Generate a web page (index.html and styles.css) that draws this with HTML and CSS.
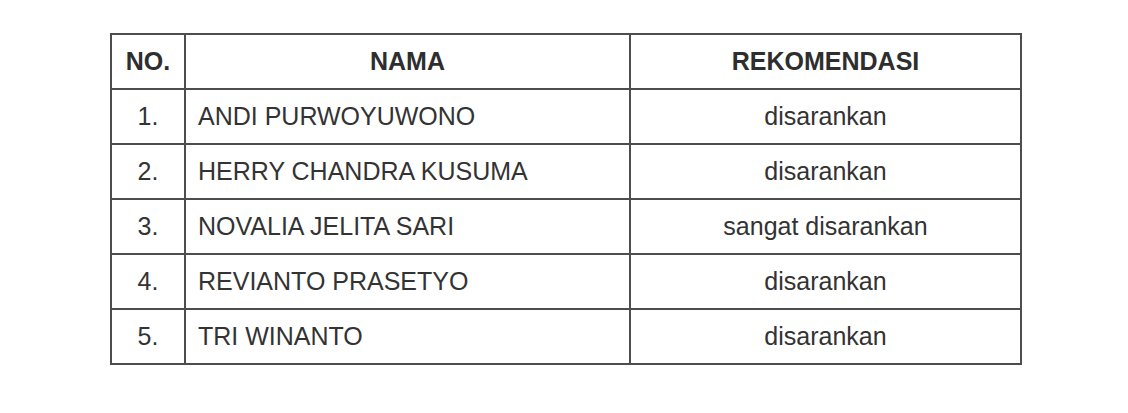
FILE: index.html
```html
<!DOCTYPE html>
<html lang="id">
<head>
<meta charset="utf-8">
<title>Rekomendasi</title>
<link rel="stylesheet" href="styles.css">
</head>
<body>
<div class="page">
  <table class="rekap">
    <colgroup>
      <col class="c-no">
      <col class="c-nama">
      <col class="c-rek">
    </colgroup>
    <thead>
      <tr>
        <th>NO.</th>
        <th>NAMA</th>
        <th>REKOMENDASI</th>
      </tr>
    </thead>
    <tbody>
      <tr><td class="no">1.</td><td class="nama">ANDI PURWOYUWONO</td><td class="rek">disarankan</td></tr>
      <tr><td class="no">2.</td><td class="nama">HERRY CHANDRA KUSUMA</td><td class="rek">disarankan</td></tr>
      <tr><td class="no">3.</td><td class="nama">NOVALIA JELITA SARI</td><td class="rek">sangat disarankan</td></tr>
      <tr><td class="no">4.</td><td class="nama">REVIANTO PRASETYO</td><td class="rek">disarankan</td></tr>
      <tr><td class="no">5.</td><td class="nama">TRI WINANTO</td><td class="rek">disarankan</td></tr>
    </tbody>
  </table>
</div>
</body>
</html>
```

FILE: styles.css
```css
html, body {
  margin: 0;
  padding: 0;
  background: #ffffff;
}

.page {
  padding: 33px 0 0 110px;
  font-family: "Liberation Sans", Arial, sans-serif;
  color: #333333;
}

.rekap {
  border-collapse: collapse;
  width: 910px;
  table-layout: fixed;
  font-size: 25px;
}

.c-no { width: 74px; }
.c-nama { width: 445px; }
.c-rek { width: 391px; }

.rekap th,
.rekap td {
  border: 2px solid #4d4d4d;
  height: 53px;
  padding: 0;
  vertical-align: middle;
  line-height: 1;
}

.rekap th {
  font-weight: bold;
  text-align: center;
  color: #2e2e2e;
}

.rekap td.no {
  text-align: center;
}

.rekap td.nama {
  text-align: left;
  padding-left: 12px;
}

.rekap td.rek {
  text-align: center;
}
```
